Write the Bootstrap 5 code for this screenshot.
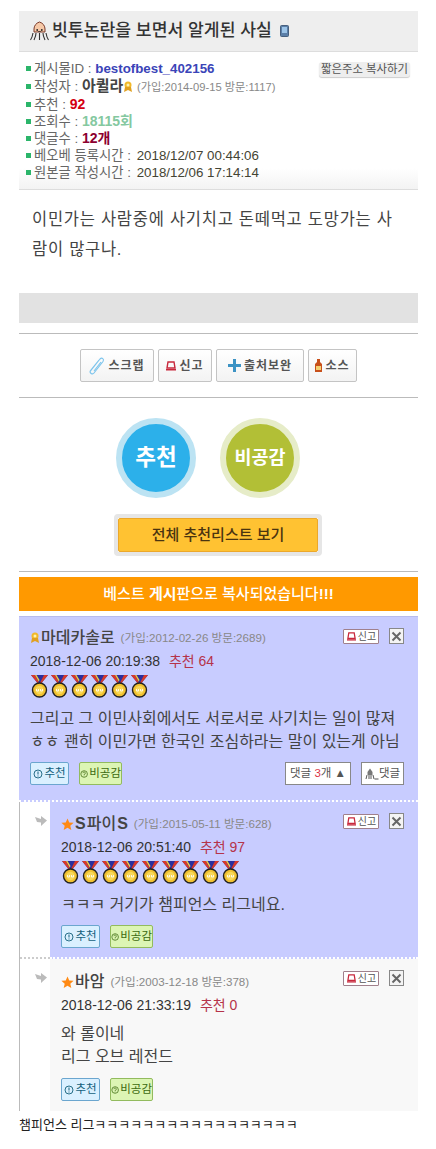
<!DOCTYPE html>
<html lang="ko">
  <head>
    <meta charset="UTF-8" />
    <meta name="viewport" content="width=device-width, initial-scale=1.0" />
    <title>빗투논란을 보면서 알게된 사실</title>
    <link
      href="https://cdn.jsdelivr.net/npm/bootstrap@5.3.3/dist/css/bootstrap.min.css"
      rel="stylesheet" />
    <style>
      body {
        font-family: "Liberation Sans", "Noto Sans CJK KR", sans-serif;
        color: #333;
        background: #fff;
      }
      .page-wrap { width: 399px; margin: 11px 0 0 19px; }
      .title-bar {
        height: 41px;
        background: #eee;
        border-bottom: 1px solid #ddd;
        padding-left: 11px;
        font-size: 17.2px;
        font-weight: 500;
        gap: 3px;
      }
      .title-bar svg.phone { margin-left: 5px; }
      .info-box {
        height: 138px;
        padding: 8px 7px 0 7px;
        position: relative;
        font-size: 13.33px;
        line-height: 17px;
        color: #666;
        background: linear-gradient(#fff 85%, #f3f3f3);
        border-bottom: 1px solid #ddd;
      }
      .info-box li { list-style: none; white-space: nowrap; }
      .info-box ul { margin: 0; padding: 0; }
      .info-box li::before {
        content: "";
        display: inline-block;
        width: 5px;
        height: 5px;
        margin: 0 3px 2px 0;
        background: #2bb56a;
      }
      .info-val { color: #443; margin-left: 2px; }
      .info-id { color: #3a44b8; font-weight: 700; }
      .info-author { color: #444; font-weight: 700; font-size: 15px; }
      .info-join { color: #888; font-size: 11.2px; }
      .info-rec { color: #d40010; font-weight: 700; font-size: 14px; }
      .info-hit { color: #84c8a0; font-weight: 700; font-size: 14px; }
      .info-cnt { color: #8c0030; font-weight: 700; font-size: 14px; }
      .short-url {
        position: absolute;
        top: 10px;
        right: 8px;
        font-size: 11.4px;
        line-height: 15px;
        padding: 0 2px;
        color: #555;
        background: #eee;
        border-radius: 3px;
        box-shadow: 0 1px 1px #ccc;
      }
      .post-text {
        padding: 14px 15px 0 13px;
        height: 103px;
        font-size: 16.5px;
        letter-spacing: 0.73px;
        line-height: 30px;
        color: #444;
      }
      .gray-bar { height: 30px; background: #e2e2e2; margin-bottom: 10px; }
      .line-hr { height: 1px; background: #bbb; }
      .tool-row { height: 63px; gap: 4px; padding-right: 1px; }
      .tool-btn {
        height: 33px;
        gap: 2px;
        font-size: 12px;
        font-weight: 700;
        color: #555;
        border: 1px solid #c4c4c4;
        border-radius: 2px;
        background: linear-gradient(#fff, #f3f3f3);
        letter-spacing: 1px;
      }
      .tb-scrap { width: 74px; }
      .tb-report { width: 54px; }
      .tb-source { width: 88px; }
      .tb-sauce { width: 49px; }
      .vote-row { gap: 24px; margin: 20px 0 16px 0; padding-right: 21px; }
      .vote-circle {
        width: 80px;
        height: 80px;
        border-radius: 50%;
        color: #fff;
        font-weight: 700;
      }
      .vote-up { background: #2cb0ea; border: 6px solid #bce3f3; font-size: 22.500px; }
      .vote-down { background: #b2bf36; border: 6px solid #e6ecc8; font-size: 18.500px; }
      .all-list {
        width: 208px;
        height: 42px;
        margin: 0 auto 15px 95px;
        border: 4px solid #e6e6e6;
        border-radius: 4px;
      }
      .all-list div {
        height: 34px;
        background: #ffc232;
        border: 1px solid #eca82a;
        border-radius: 2px;
        font-size: 15px;
        font-weight: 500;
        color: #4a3410;
      }
      .copied {
        height: 34px;
        margin: 5px 0 5px 0;
        background: #ff9900;
        color: #fff;
        font-size: 15px;
        font-weight: 500;
      }
      .cmt { position: relative; }
      .cmt-top {
        height: 186px;
        background: #c8ccff;
        border-top: 1px solid #b8bcee;
        border-bottom: 2px dotted #fff;
        padding: 11px 0 0 11px;
      }
      .cmt-sub { padding-left: 30px; border-left: 1px solid #bbb; }
      .cmt-inner { padding: 12px 0 0 11px; }
      .cmt-two { background: #c8ccff; height: 157px; border-bottom: 2px dotted #fff; }
      .cmt-two::after {
        content: "";
        position: absolute;
        left: -30px;
        bottom: -2px;
        width: 30px;
        border-top: 2px dotted #ccc;
      }
      .cmt-three { background: #f8f8f8; height: 152px; padding-top: 13px; }
      .cmt-arrow { position: absolute; left: -15px; top: 14px; }
      .cmt-name { font-size: 16px; line-height: 20px; color: #444; font-weight: 500; gap: 1px; }
      .cmt-name small { font-size: 11.6px; color: #888; margin-left: 5px; font-weight: 400; }
      .cmt-date { font-size: 14px; line-height: 20px; margin-top: 3px; color: #333; }
      .cmt-date span { color: #b5334a; margin-left: 5px; }
      .medal-row { height: 24px; margin-top: 4px; gap: 1px; }
      .cmt-body { font-size: 16px; line-height: 23px; color: #444; white-space: nowrap; }
      .body-first { margin-top: 8px; }
      .body-reply { margin-top: 8px; }
      .body-plain { margin-top: 7px; }
      .vote-small {
        height: 23px;
        font-size: 11.5px;
        border-radius: 2px;
        gap: 1px;
        white-space: nowrap;
        flex-shrink: 0;
      }
      .vs-up { width: 39px; color: #14607c; background: #daf0ff; border: 1px solid #6ba6cf; }
      .vs-down { width: 43px; color: #3d6a10; background: #dcf5b4; border: 1px solid #92bb5e; }
      .cmt-btns { gap: 10px; position: absolute; left: 11px; bottom: 9px; }
      .cmt-top .cmt-btns { bottom: 15px; }
      .cmt-three .cmt-btns { bottom: 10px; }
      .reply-btns { gap: 10px; position: absolute; right: 14px; bottom: 15px; }
      .white-btn {
        height: 23px;
        background: #fff;
        border: 1px solid #888;
        font-size: 11.5px;
        color: #555;
        white-space: nowrap;
      }
      .wb-count { width: 66px; }
      .wb-reply { width: 43px; }
      .wb-num { color: #dc3545; }
      .cmt-tools { position: absolute; right: 14px; top: 11px; gap: 10px; }
      .report-btn {
        width: 36px;
        height: 15px;
        background: #fff;
        border: 1px solid #a0808c;
        border-radius: 1px;
        font-size: 10px;
        color: #555;
        gap: 1px;
      }
      .close-btn {
        width: 15px;
        height: 16px;
        background: #f4f4f4;
        border: 1px solid #888;
      }
      .foot-text { font-size: 13px; line-height: 16px; margin-top: 6px; color: #222; white-space: nowrap; }
    </style>
  </head>
  <body>
    <svg width="0" height="0" class="d-block position-absolute">
      <symbol id="medal" viewBox="0 0 19 23">
        <path d="M1 0h17l-6.500 8h-4z" fill="#2a2f9e" />
        <path d="M1 0h4l4 8H7.500z" fill="#d8382a" />
        <path d="M18 0h-4l-4 8h1.500z" fill="#d8382a" />
        <path d="M5 0h1.500l3 5-.8 1.400z" fill="#f2cf40" />
        <circle cx="9.500" cy="15" r="7" fill="#f0c030" stroke="#222" stroke-width="1.400" />
        <circle cx="9.500" cy="15" r="4.200" fill="#f8d858" />
        <path d="M6.500 14v2h2v-2M10.500 14v2h2v-2" fill="none" stroke="#fff" stroke-width="0.800" />
      </symbol>
      <symbol id="star" viewBox="0 0 14 14">
        <path d="M7 .5l1.900 4.300 4.700.4-3.600 3.100 1.100 4.600L7 10.500l-4.100 2.400L4 8.300.4 5.200l4.700-.4z" fill="#ff8a14" />
      </symbol>
      <symbol id="siren" viewBox="0 0 12 10">
        <path d="M3 1h6l1 6H2z" fill="none" stroke="#c8283c" stroke-width="1.400" />
        <path d="M1 8h10v1.500H1z" fill="#c8283c" />
      </symbol>
      <symbol id="xmark" viewBox="0 0 11 11">
        <path d="M1.500 1.500l8 8M9.500 1.500l-8 8" stroke="#666" stroke-width="2" />
      </symbol>
      <symbol id="arrow" viewBox="0 0 12 10">
        <path d="M0 1l6 2V0l6 4.500L6 10V6.500L2 6z" fill="#bbb" />
      </symbol>
      <symbol id="q1" viewBox="0 0 10 10">
        <circle cx="5" cy="5" r="4" fill="none" stroke="#14607c" stroke-width="0.900" />
        <path d="M5 2.500v3M5 6.500v1" stroke="#14607c" />
      </symbol>
      <symbol id="q2" viewBox="0 0 10 10">
        <circle cx="5" cy="5" r="4" fill="none" stroke="#3d6a10" stroke-width="0.900" />
        <path d="M3.500 4a1.500 1.500 0 1 1 1.500 1.500v.8M5 7v.8" fill="none" stroke="#3d6a10" stroke-width="0.800" />
      </symbol>
      <symbol id="squidmini" viewBox="0 0 14 12">
        <path d="M5 0.500L7.500 4v3h-5V4z" fill="#777" />
        <path d="M2 7l-1 4M4 7v4M6 7v4M8 7l1 4" stroke="#555" />
        <path d="M9.500 11h4" stroke="#555" />
      </symbol>
      <symbol id="ribbon" viewBox="0 0 10 12">
        <circle cx="5" cy="4" r="3.500" fill="#f2b92a" />
        <path d="M2 6L1 11l4-2 4 2-1-5z" fill="#e0a020" />
        <circle cx="5" cy="4" r="1.500" fill="#fff2b0" />
      </symbol>
    </svg>

    <div class="page-wrap">
      <div class="title-bar d-flex align-items-center">
        <svg width="19" height="21" viewBox="0 0 19 21">
          <path d="M9.500 1C13 2 15 5 15 8v3H4V8c0-3 2-6 5.500-7z" fill="#f6c9a8" stroke="#7a3a2a" />
          <path d="M3 12c-.5 3-1 5-2.500 7M6 12c0 3-1 5-2 7M9.500 12v7M13 12c0 3 1 5 2 7M16 12c.5 3 1 5 2.500 7" fill="none" stroke="#333" stroke-width="1.100" />
          <circle cx="7.200" cy="9" r="0.900" fill="#222" />
          <circle cx="11.800" cy="9" r="0.900" fill="#222" />
          <path d="M8.200 10.500h2.600" stroke="#222" stroke-width="0.700" />
        </svg>
        <span>빗투논란을 보면서 알게된 사실</span>
        <svg class="phone" width="9" height="12" viewBox="0 0 9 12">
          <rect x="0.500" y="0.500" width="8" height="11" rx="1" fill="#5b7fa8" stroke="#47607f" />
          <rect x="2" y="2" width="5" height="6" fill="#9cc4e8" />
        </svg>
      </div>

      <div class="info-box">
        <div class="short-url">짧은주소 복사하기</div>
        <ul>
          <li>게시물ID : <span class="info-id">bestofbest_402156</span></li>
          <li>작성자 : <span class="info-author">아퀼라</span><svg width="10" height="12"><use href="#ribbon" /></svg> <span class="info-join">(가입:2014-09-15 방문:1117)</span></li>
          <li>추천 : <span class="info-rec">92</span></li>
          <li>조회수 : <span class="info-hit">18115회</span></li>
          <li>댓글수 : <span class="info-cnt">12개</span></li>
          <li>베오베 등록시간 : <span class="info-val">2018/12/07 00:44:06</span></li>
          <li>원본글 작성시간 : <span class="info-val">2018/12/06 17:14:14</span></li>
        </ul>
      </div>

      <div class="post-text">이민가는 사람중에 사기치고 돈떼먹고 도망가는 사람이 많구나.</div>
      <div class="gray-bar"></div>
      <div class="line-hr"></div>

      <div class="tool-row d-flex justify-content-center align-items-center">
        <div class="tool-btn tb-scrap d-flex align-items-center justify-content-center">
          <svg width="18" height="20" viewBox="0 0 18 20">
            <path d="M2.500 15L12 3c2-2 4.500 0 3 2.500L6 17c-1.500 2-5 0-3.500-2.500L11 4M6 15l7-9" fill="none" stroke="#7cc4ec" stroke-width="1.100" />
          </svg>스크랩
        </div>
        <div class="tool-btn tb-report d-flex align-items-center justify-content-center">
          <svg width="12" height="10"><use href="#siren" /></svg>신고
        </div>
        <div class="tool-btn tb-source d-flex align-items-center justify-content-center">
          <svg width="15" height="15" viewBox="0 0 15 15">
            <path d="M6 1h3v5h5v3H9v5H6V9H1V6h5z" fill="#3d93c4" />
          </svg>출처보완
        </div>
        <div class="tool-btn tb-sauce d-flex align-items-center justify-content-center">
          <svg width="9" height="15" viewBox="0 0 9 15">
            <path d="M3 1h3v3l2 2v8H1V6l2-2z" fill="#c8501a" />
            <rect x="2" y="8" width="5" height="4" fill="#f4d070" />
          </svg>소스
        </div>
      </div>
      <div class="line-hr"></div>

      <div class="vote-row d-flex justify-content-center">
        <div class="vote-circle vote-up d-flex align-items-center justify-content-center">추천</div>
        <div class="vote-circle vote-down d-flex align-items-center justify-content-center">비공감</div>
      </div>
      <div class="all-list">
        <div class="d-flex align-items-center justify-content-center">전체 추천리스트 보기</div>
      </div>
      <div class="line-hr"></div>
      <div class="copied d-flex align-items-center justify-content-center">
        <span>베스트 <b>게시</b>판으로 복사되었습니다<b>!!!</b></span>
      </div>

      <div class="cmt cmt-top">
        <div class="cmt-tools d-flex align-items-center">
          <div class="report-btn d-flex align-items-center justify-content-center"><svg width="11" height="9"><use href="#siren" /></svg>신고</div>
          <div class="close-btn d-flex align-items-center justify-content-center"><svg width="11" height="11"><use href="#xmark" /></svg></div>
        </div>
        <div class="cmt-name d-flex align-items-center">
          <svg width="10" height="12"><use href="#ribbon" /></svg><span>마데카솔로</span><small>(가입:2012-02-26 방문:2689)</small>
        </div>
        <div class="cmt-date">2018-12-06 20:19:38 <span>추천 64</span></div>
        <div class="medal-row d-flex">
          <svg width="19" height="23"><use href="#medal" /></svg>
          <svg width="19" height="23"><use href="#medal" /></svg>
          <svg width="19" height="23"><use href="#medal" /></svg>
          <svg width="19" height="23"><use href="#medal" /></svg>
          <svg width="19" height="23"><use href="#medal" /></svg>
          <svg width="19" height="23"><use href="#medal" /></svg>
        </div>
        <div class="cmt-body body-first">그리고 그 이민사회에서도 서로서로 사기치는 일이 많져<br />ㅎㅎ 괜히 이민가면 한국인 조심하라는 말이 있는게 아님</div>
        <div class="cmt-btns d-flex">
          <div class="vote-small vs-up d-flex align-items-center justify-content-center"><svg width="10" height="10"><use href="#q1" /></svg>추천</div>
          <div class="vote-small vs-down d-flex align-items-center justify-content-center"><svg width="10" height="10"><use href="#q2" /></svg>비공감</div>
        </div>
        <div class="reply-btns d-flex">
          <div class="white-btn wb-count d-flex align-items-center justify-content-center"><span>댓글 <span class="wb-num">3</span>개 ▲</span></div>
          <div class="white-btn wb-reply d-flex align-items-center justify-content-center"><svg width="14" height="12"><use href="#squidmini" /></svg>댓글</div>
        </div>
      </div>

      <div class="cmt-sub">
        <div class="cmt cmt-two cmt-inner">
          <svg class="cmt-arrow" width="12" height="10"><use href="#arrow" /></svg>
          <div class="cmt-tools d-flex align-items-center">
            <div class="report-btn d-flex align-items-center justify-content-center"><svg width="11" height="9"><use href="#siren" /></svg>신고</div>
            <div class="close-btn d-flex align-items-center justify-content-center"><svg width="11" height="11"><use href="#xmark" /></svg></div>
          </div>
          <div class="cmt-name d-flex align-items-center">
            <svg width="13" height="13"><use href="#star" /></svg><b>S</b><span>파이</span><b>S</b><small>(가입:2015-05-11 방문:628)</small>
          </div>
          <div class="cmt-date">2018-12-06 20:51:40 <span>추천 97</span></div>
          <div class="medal-row d-flex">
            <svg width="19" height="23"><use href="#medal" /></svg>
            <svg width="19" height="23"><use href="#medal" /></svg>
            <svg width="19" height="23"><use href="#medal" /></svg>
            <svg width="19" height="23"><use href="#medal" /></svg>
            <svg width="19" height="23"><use href="#medal" /></svg>
            <svg width="19" height="23"><use href="#medal" /></svg>
            <svg width="19" height="23"><use href="#medal" /></svg>
            <svg width="19" height="23"><use href="#medal" /></svg>
            <svg width="19" height="23"><use href="#medal" /></svg>
          </div>
          <div class="cmt-body body-reply">ㅋㅋㅋ 거기가 챔피언스 리그네요.</div>
          <div class="cmt-btns d-flex">
            <div class="vote-small vs-up d-flex align-items-center justify-content-center"><svg width="10" height="10"><use href="#q1" /></svg>추천</div>
            <div class="vote-small vs-down d-flex align-items-center justify-content-center"><svg width="10" height="10"><use href="#q2" /></svg>비공감</div>
          </div>
        </div>
        <div class="cmt cmt-three cmt-inner">
          <svg class="cmt-arrow" width="12" height="10"><use href="#arrow" /></svg>
          <div class="cmt-tools d-flex align-items-center">
            <div class="report-btn d-flex align-items-center justify-content-center"><svg width="11" height="9"><use href="#siren" /></svg>신고</div>
            <div class="close-btn d-flex align-items-center justify-content-center"><svg width="11" height="11"><use href="#xmark" /></svg></div>
          </div>
          <div class="cmt-name d-flex align-items-center">
            <svg width="13" height="13"><use href="#star" /></svg><span>바암</span><small>(가입:2003-12-18 방문:378)</small>
          </div>
          <div class="cmt-date">2018-12-06 21:33:19 <span>추천 0</span></div>
          <div class="cmt-body body-plain">와 롤이네<br />리그 오브 레전드</div>
          <div class="cmt-btns d-flex">
            <div class="vote-small vs-up d-flex align-items-center justify-content-center"><svg width="10" height="10"><use href="#q1" /></svg>추천</div>
            <div class="vote-small vs-down d-flex align-items-center justify-content-center"><svg width="10" height="10"><use href="#q2" /></svg>비공감</div>
          </div>
        </div>
      </div>

      <div class="foot-text">챔피언스 리그ㅋㅋㅋㅋㅋㅋㅋㅋㅋㅋㅋㅋㅋㅋㅋㅋㅋ</div>
    </div>

    <script src="https://cdn.jsdelivr.net/npm/bootstrap@5.3.3/dist/js/bootstrap.bundle.min.js"></script>
  </body>
</html>
